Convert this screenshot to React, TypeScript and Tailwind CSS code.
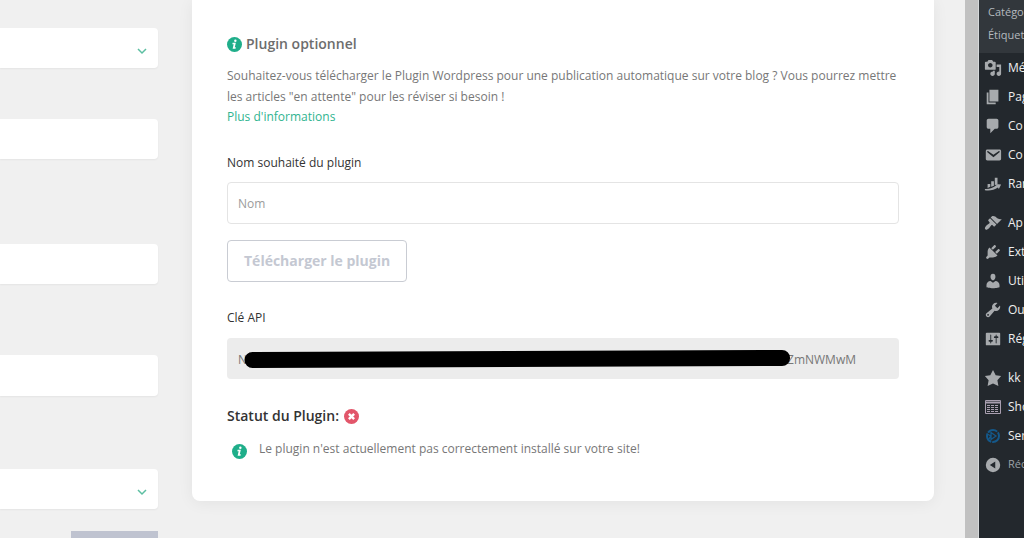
import { useState, type ReactNode } from 'react';

interface MenuEntry {
  label: string;
  icon: ReactNode;
  startsGroup?: boolean;
  muted?: boolean;
}

function InfoIcon({ className }: { className: string }) {
  return (
    <svg className={className} viewBox="0 0 16 16" aria-hidden="true">
      <circle cx="8" cy="8" r="8" fill="#1fae8a" />
      <circle cx="8.900" cy="3.900" r="1.300" fill="white" />
      <path d="M6 6.200h3.400L8.300 11h1.100l-.3 1.400H6L7.100 7.600H5.700z" fill="white" />
    </svg>
  );
}

function ErrorIcon({ className }: { className: string }) {
  return (
    <svg className={className} viewBox="0 0 16 16" aria-label="Non installé" role="img">
      <circle cx="8" cy="8" r="8" fill="#e2566a" />
      <path d="M5.200 5.200l5.600 5.600M10.800 5.200l-5.600 5.600" stroke="white" strokeWidth="2.600" />
    </svg>
  );
}

function ChevronIcon() {
  return (
    <svg className="pointer-events-none absolute top-1/2 right-[11px] h-2 w-2.5" viewBox="0 0 10 8" fill="none" aria-hidden="true">
      <path d="M1 1l4 4 4-4" stroke="#5cbfa2" strokeWidth="1.500" />
    </svg>
  );
}

function MenuIcon({ d }: { d: string }) {
  return (
    <svg className="h-[18px] w-[18px] shrink-0" viewBox="0 0 20 20" fill="#a7aaad" aria-hidden="true">
      <path d={d} />
    </svg>
  );
}

const menu: MenuEntry[] = [
  {
    label: 'Mé',
    icon: <MenuIcon d="M13 11V4c0-.55-.45-1-1-1h-1.670L9 1H5L3.670 3H2c-.55 0-1 .45-1 1v7c0 .55.450 1 1 1h10c.55 0 1-.45 1-1zM7 4.500c1.380 0 2.500 1.120 2.500 2.500S8.380 9.500 7 9.500 4.500 8.380 4.500 7 5.620 4.500 7 4.500zM14 6h5v10.500c0 1.380-1.120 2.500-2.500 2.500S14 17.880 14 16.500s1.120-2.500 2.500-2.500c.17 0 .34.020.5.050V9h-3V6zm-4 8.050V13h2v3.500c0 1.380-1.120 2.500-2.500 2.500S7 17.880 7 16.500 8.120 14 9.500 14c.17 0 .34.020.5.050z" />,
  },
  { label: 'Pag', icon: <MenuIcon d="M6 15V2h10v13H6zm-1 1h8v2H3V5h2v11z" /> },
  { label: 'Co', icon: <MenuIcon d="M5 2h9c1.100 0 2 .9 2 2v7c0 1.100-.9 2-2 2h-2l-5 5v-5H5c-1.100 0-2-.9-2-2V4c0-1.100.9-2 2-2z" /> },
  {
    label: 'Co',
    icon: <MenuIcon d="M3.870 4h13.250C18.370 4 19 4.590 19 5.790v8.420c0 1.190-.63 1.790-1.880 1.790H3.870c-1.250 0-1.880-.6-1.880-1.790V5.790c0-1.200.63-1.790 1.880-1.790zm6.620 8.600l6.740-5.530c.24-.2.430-.66.130-1.070-.29-.41-.82-.42-1.170-.17l-5.700 3.860L4.800 5.830c-.35-.25-.88-.24-1.170.17-.3.410-.11.870.13 1.070z" />,
  },
  {
    label: 'Ran',
    icon: <MenuIcon d="M4 10h3v3l-3 1.500zM8 7h3v5l-3 1zM12 3h3v7l-3 1.500zM1 15.500c5 .5 9-1.500 13-4.500l-1-1 6 .5-2.500 5-1-1.500c-4 2.500-9 4-14.500 3z" />,
  },
  {
    label: 'Ap',
    startsGroup: true,
    icon: <MenuIcon d="M14.480 11.060L7.410 3.990l1.500-1.500c.5-.56 2.300-.47 3.510.32 1.210.8 1.430 1.280 2.910 2.100 1.180.64 2.450 1.260 4.450.85zm-.71.710L6.700 4.700 4.930 6.470c-.39.390-.39 1.020 0 1.410l1.060 1.060c.39.390.39 1.030 0 1.420-.6.600-1.430 1.110-2.210 1.690-.35.260-.7.530-1.010.84C1.430 14.230.400 16.080 1.400 17.070c.99 1 2.840-.03 4.180-1.360.31-.31.580-.66.850-1.020.57-.78 1.080-1.610 1.690-2.210.39-.39 1.020-.39 1.410 0l1.060 1.060c.39.390 1.020.390 1.410 0z" />,
  },
  {
    label: 'Ext',
    icon: <MenuIcon d="M13.110 4.360L9.870 7.600 8 5.730l3.240-3.240c.35-.34 1.050-.2 1.560.32.520.510.660 1.210.310 1.550zm-8 1.770l.91-1.120 9.010 9.010-1.190.84c-.71.710-2.630 1.160-3.820 1.160H6.140L4.900 17.260c-.59.590-1.540.590-2.120 0-.59-.58-.59-1.530 0-2.120l1.240-1.240v-3.880c0-1.130.400-3.190 1.090-3.890zm7.260 3.970l3.240-3.240c.34-.35 1.040-.21 1.550.310.520.510.660 1.210.310 1.550l-3.240 3.250z" />,
  },
  {
    label: 'Uti',
    icon: <MenuIcon d="M10 9.250c-2.270 0-2.730-3.440-2.730-3.440C7 4.020 7.820 2 9.970 2c2.160 0 2.980 2.020 2.710 3.810 0 0-.41 3.440-2.680 3.440zm0 2.570L12.720 10c2.390 0 4.520 2.330 4.520 4.530v2.490s-3.650 1.130-7.240 1.130c-3.650 0-7.240-1.130-7.240-1.130v-2.490c0-2.250 1.940-4.480 4.470-4.480z" />,
  },
  {
    label: 'Ou',
    icon: <MenuIcon d="M16.680 9.770c-1.340 1.340-3.300 1.670-4.950.99l-5.410 6.520c-.99.990-2.590.990-3.580 0s-.99-2.590 0-3.570l6.520-5.420c-.68-1.650-.35-3.610.99-4.950 1.280-1.280 3.120-1.620 4.720-1.060l-2.890 2.890 2.820 2.820 2.860-2.870c.53 1.580.180 3.390-1.080 4.650zM3.810 16.210c.4.390 1.040.390 1.430 0 .4-.400.400-1.040 0-1.430-.39-.400-1.030-.400-1.430 0-.39.390-.39 1.030 0 1.430z" />,
  },
  {
    label: 'Rég',
    icon: <MenuIcon d="M18 16V4c0-.55-.45-1-1-1H3c-.55 0-1 .45-1 1v12c0 .55.450 1 1 1h14c.55 0 1-.45 1-1zM8 11h1c.55 0 1 .45 1 1s-.45 1-1 1H8v1.500c0 .28-.22.500-.5.500s-.5-.22-.5-.5V13H6c-.55 0-1-.45-1-1s.45-1 1-1h1V5.500c0-.28.220-.5.500-.5s.500.220.500.500V11zm5-2h-1c-.55 0-1-.45-1-1s.45-1 1-1h1V5.500c0-.28.220-.5.500-.5s.500.220.500.500V7h1c.55 0 1 .45 1 1s-.45 1-1 1h-1v5.500c0 .28-.22.500-.5.500s-.5-.22-.5-.5V9z" />,
  },
  { label: 'kk', startsGroup: true, icon: <MenuIcon d="M10 1l3 6 6 .75-4.120 4.620L16 19l-6-3-6 3 1.130-6.630L1 7.750 7 7z" /> },
  {
    label: 'Sho',
    icon: (
      <svg className="h-[18px] w-[18px] shrink-0" viewBox="0 0 18 18" fill="none" stroke="#a99fb0" aria-hidden="true">
        <path d="M1.500 2.500h15v13h-15z" />
        <path d="M1.500 4.500h15" strokeWidth="2" />
        <path d="M3 7.500h12M3 9.500h12M3 11.500h12M3 13.500h12" strokeDasharray="3 1" />
      </svg>
    ),
  },
  {
    label: 'Ser',
    icon: (
      <svg className="h-[18px] w-[18px] shrink-0" viewBox="0 0 18 18" fill="none" stroke="#14588a" aria-hidden="true">
        <circle cx="9" cy="9" r="6" strokeWidth="2" strokeDasharray="10 1" />
        <path d="M7 5.500l5 3.500-5 3.500zM3 7l4 2-3 4" strokeWidth="1.300" />
      </svg>
    ),
  },
  {
    label: 'Réc',
    muted: true,
    icon: <MenuIcon d="M10 2a8 8 0 1 0 0 16 8 8 0 0 0 0-16zm2.500 4v8L6.500 10z" />,
  },
];

const fieldClass = 'block w-full shrink-0 rounded-r-sm bg-white px-3 text-xs shadow-xs focus:outline-none';

function SettingsColumn() {
  return (
    <div className="flex w-[158px] shrink-0 flex-col pt-7">
      <div className="relative shrink-0">
        <select aria-label="Langue" className={`${fieldClass} h-10 appearance-none`} />
        <ChevronIcon />
      </div>
      <input type="text" aria-label="Titre" className={`${fieldClass} mt-[51px] h-10`} />
      <input type="text" aria-label="Adresse" className={`${fieldClass} mt-[85px] h-10`} />
      <input type="text" aria-label="Identifiant" className={`${fieldClass} mt-[71px] h-[41px]`} />
      <div className="relative mt-[73px] shrink-0">
        <select aria-label="Catégorie" className={`${fieldClass} h-10 appearance-none`} />
        <ChevronIcon />
      </div>
      <button type="button" aria-label="Enregistrer" className="mt-[22px] h-10 w-[87px] shrink-0 self-end bg-[#bfc3d0]" />
    </div>
  );
}

function PluginCard() {
  const [name, setName] = useState('');

  return (
    <section className="min-w-0 flex-1 self-start rounded-b-lg bg-white px-[35px] pt-[33px] pb-[42px] shadow-[0_2px_16px_rgba(0,0,0,0.06)]">
      <h2 className="flex items-center gap-1 text-sm leading-[22px] font-semibold text-[#6d6d6d]">
        <InfoIcon className="h-[15px] w-[15px]" />
        Plugin optionnel
      </h2>
      <p className="mt-[10px] text-xs leading-[21px] text-[#777777]">
        Souhaitez-vous télécharger le Plugin Wordpress pour une publication automatique sur votre blog ? Vous pourrez mettre
        les articles "en attente" pour les réviser si besoin !
      </p>
      <a href="#informations" className="block text-xs leading-5 text-[#2fb490]">
        Plus d'informations
      </a>

      <label htmlFor="plugin-name" className="mt-[26px] block text-xs leading-5 text-[#333333]">
        Nom souhaité du plugin
      </label>
      <input
        id="plugin-name"
        type="text"
        placeholder="Nom"
        value={name}
        onChange={(e) => setName(e.target.value)}
        className="mt-[9px] block h-[42px] w-full rounded-sm border border-[#e4e4e4] px-[10px] text-xs text-[#777777] placeholder:text-[#9c9c9c] focus:outline-none"
      />
      <button
        type="button"
        className="mt-4 block h-[42px] rounded-sm border border-[#c9ccd3] px-4 text-sm font-bold text-[#c4c8d2]"
      >
        Télécharger le plugin
      </button>

      <label htmlFor="api-key" className="mt-[26px] block text-xs leading-5 text-[#333333]">
        Clé API
      </label>
      <div className="relative mt-[10px]">
        <div className="flex h-[41px] items-center justify-between rounded-sm bg-[#ececec] pt-[2px] pr-[43px] pl-[11px] text-xs text-[#777777]">
          <output id="api-key">N</output>
          <span>ZmNWMwM</span>
        </div>
        {/* Masque de la clé */}
        <svg className="absolute inset-0 h-full w-full" aria-hidden="true">
          <line x1="3.800%" y1="22" x2="82.600%" y2="20" stroke="black" strokeWidth="16" strokeLinecap="round" />
        </svg>
      </div>

      <h3 className="mt-[26px] flex items-center gap-[5px] text-sm leading-[22px] font-semibold text-[#333333]">
        Statut du Plugin:
        <ErrorIcon className="h-[15px] w-[15px]" />
      </h3>
      <div className="mt-[11px] flex items-start gap-3 pl-[5px]">
        <InfoIcon className="mt-[6px] h-[15px] w-[15px] shrink-0" />
        <p className="text-xs leading-[21px] text-[#777777]">Le plugin n'est actuellement pas correctement installé sur votre site!</p>
      </div>
    </section>
  );
}

function AdminMenu() {
  return (
    <nav className="w-[46px] shrink-0 overflow-hidden border-l border-[#d5d8da] bg-[#23282d] text-xs whitespace-nowrap">
      <ul className="bg-[#32373c] pb-[7px] pl-[9px] text-[11px] leading-[23px] text-[#b4b9be]">
        <li>
          <a href="#categories">Catégo</a>
        </li>
        <li>
          <a href="#etiquettes">Étiquett</a>
        </li>
      </ul>
      <ul>
        {menu.map((entry, index) => (
          <li key={index} className={entry.startsGroup ? 'mt-[10px]' : ''}>
            <a
              href="#menu"
              className={`flex h-[29px] items-center gap-[6px] pl-[5px] ${
                entry.muted ? 'text-[11px] text-[#9ca1a6]' : 'font-medium text-[#eeeeee]'
              }`}
            >
              {entry.icon}
              {entry.label}
            </a>
          </li>
        ))}
      </ul>
    </nav>
  );
}

export default function App() {
  return (
    <div className="flex h-screen overflow-hidden bg-[#f0f0f0] font-['Open_Sans',sans-serif]">
      <main className="flex min-w-0 flex-1 gap-[34px] pr-[31px]">
        <SettingsColumn />
        <PluginCard />
      </main>
      <div className="w-[13px] shrink-0 bg-[#c1c1c1]" />
      <AdminMenu />
    </div>
  );
}
